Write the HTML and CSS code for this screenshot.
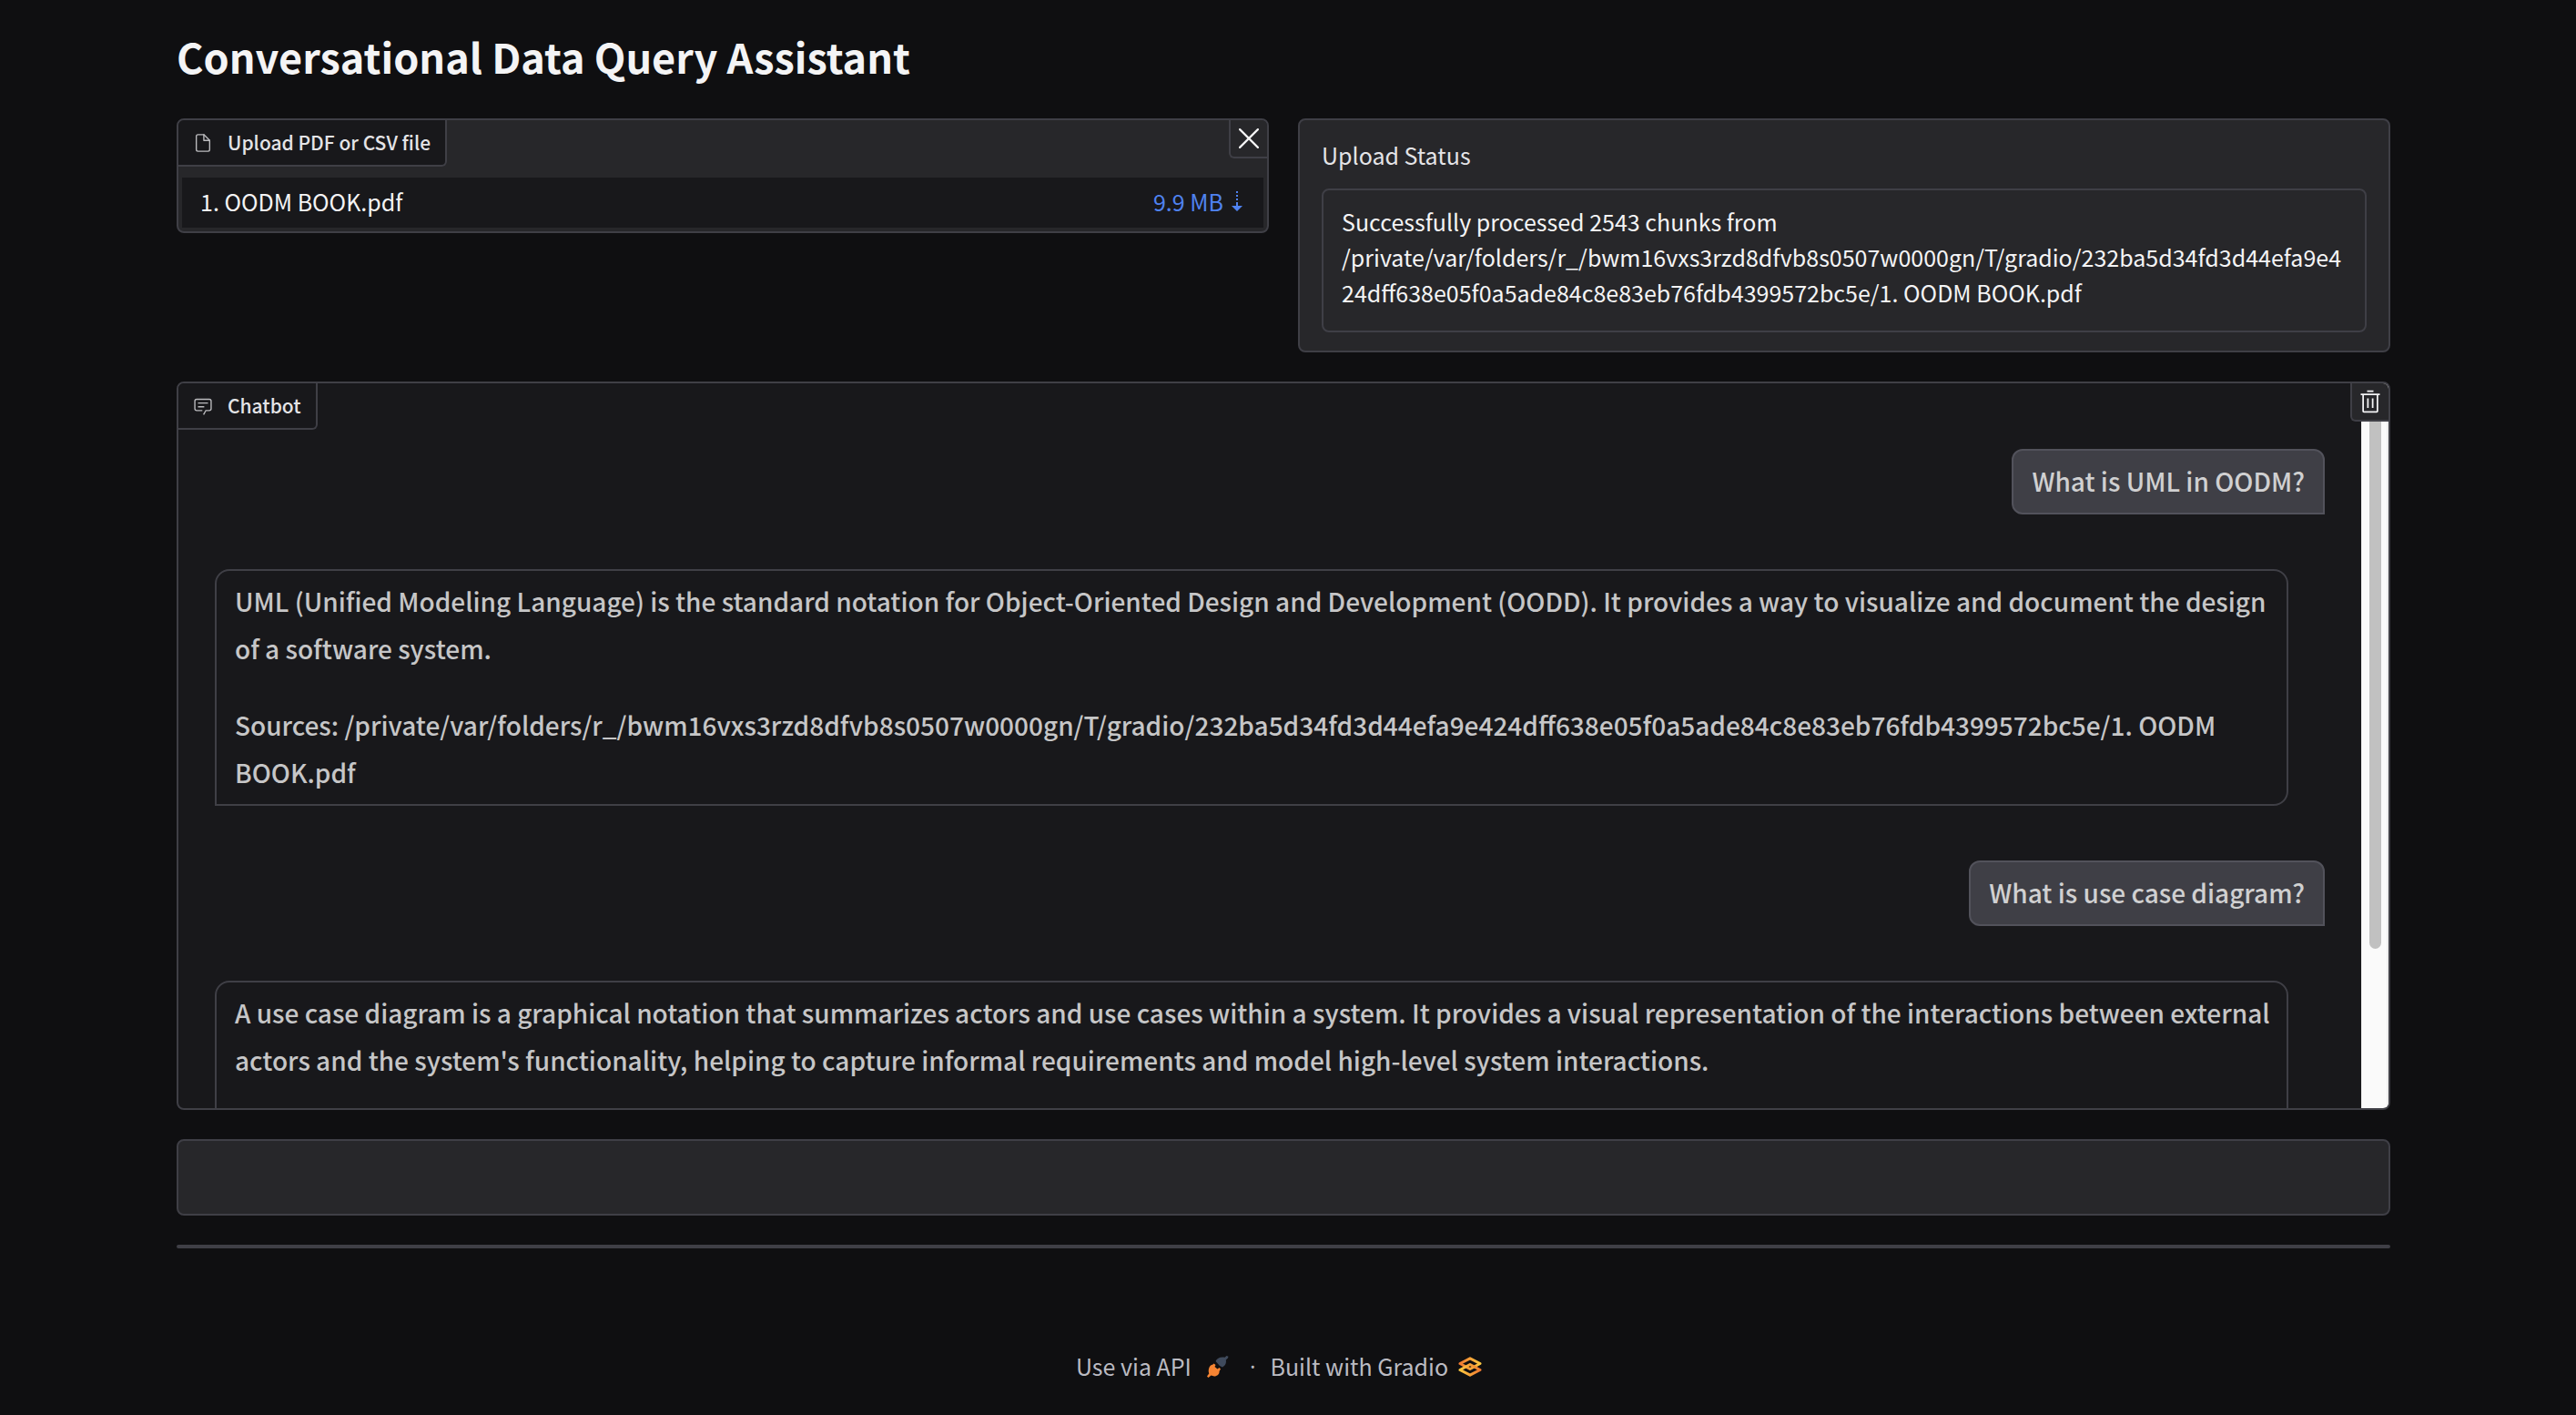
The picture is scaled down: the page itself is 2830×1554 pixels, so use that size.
FILE: index.html
```html
<!DOCTYPE html>
<html lang="en">
<head>
<meta charset="utf-8">
<meta name="viewport" content="width=device-width, initial-scale=1">
<title>Conversational Data Query Assistant</title>
<link rel="stylesheet" href="styles.css">
</head>
<body>
<main class="app">
  <h1 class="title">Conversational Data Query Assistant</h1>

  <div class="row">
    <section class="block file-block">
      <div class="block-label">
        <svg class="label-icon" viewBox="0 0 24 24" fill="none" stroke="currentColor" stroke-width="1.5" stroke-linecap="round" stroke-linejoin="round" aria-hidden="true"><path d="M13 2H6a2 2 0 0 0-2 2v16a2 2 0 0 0 2 2h12a2 2 0 0 0 2-2V9z"/><path d="M13 2v7h7"/></svg>
        <span>Upload PDF or CSV file</span>
      </div>
      <button class="corner-button" type="button" aria-label="Clear">
        <svg class="close-icon" viewBox="0 0 20 20" stroke="currentColor" stroke-width="2" stroke-linecap="round" aria-hidden="true"><path d="M1 1 19 19M19 1 1 19"/></svg>
      </button>
      <table class="files">
        <tbody>
          <tr>
            <td class="file-name">1. OODM BOOK.pdf</td>
            <td class="file-size"><a class="download" href="#">9.9 MB<svg class="download-icon" viewBox="0 0 12 24" fill="currentColor" aria-hidden="true"><path d="M5 1h2v2H5zM5 5h2v2H5zM5 9h2v2H5zM5 13h2v4H5zM0 17h12l-6 6z"/></svg></a></td>
          </tr>
        </tbody>
      </table>
    </section>

    <section class="block status-block">
      <label class="status-label" for="status">Upload Status</label>
      <textarea class="status-text" id="status" rows="3" readonly>Successfully processed 2543 chunks from /private/var/folders/r_/bwm16vxs3rzd8dfvb8s0507w0000gn/T/gradio/232ba5d34fd3d44efa9e424dff638e05f0a5ade84c8e83eb76fdb4399572bc5e/1. OODM BOOK.pdf</textarea>
    </section>
  </div>

  <section class="block chat-block">
    <div class="block-label">
      <svg class="label-icon" viewBox="0 0 32 32" fill="currentColor" aria-hidden="true"><path d="M17.74 30 16 29l4-7h6a2 2 0 0 0 2-2V8a2 2 0 0 0-2-2H6a2 2 0 0 0-2 2v12a2 2 0 0 0 2 2h9v2H6a4 4 0 0 1-4-4V8a4 4 0 0 1 4-4h20a4 4 0 0 1 4 4v12a4 4 0 0 1-4 4h-4.84Z"/><path d="M8 10h16v2H8zm0 6h10v2H8z"/></svg>
      <span>Chatbot</span>
    </div>
    <button class="corner-button" type="button" aria-label="Clear chat">
      <svg class="trash-icon" viewBox="0 0 32 32" fill="currentColor" aria-hidden="true"><path d="M12 12h2v12h-2zm6 0h2v12h-2z"/><path d="M4 6v2h2v20a2 2 0 0 0 2 2h16a2 2 0 0 0 2-2V8h2V6zm4 22V8h16v20zm4-26h8v2h-8z"/></svg>
    </button>
    <div class="messages">
      <div class="message user">What is UML in OODM?</div>
      <div class="message bot">
        <p>UML (Unified Modeling Language) is the standard notation for Object-Oriented Design and Development (OODD). It provides a way to visualize and document the design of a software system.</p>
        <p>Sources: /private/var/folders/r_/bwm16vxs3rzd8dfvb8s0507w0000gn/T/gradio/232ba5d34fd3d44efa9e424dff638e05f0a5ade84c8e83eb76fdb4399572bc5e/1. OODM BOOK.pdf</p>
      </div>
      <div class="message user">What is use case diagram?</div>
      <div class="message bot">
        <p>A use case diagram is a graphical notation that summarizes actors and use cases within a system. It provides a visual representation of the interactions between external actors and the system's functionality, helping to capture informal requirements and model high-level system interactions.</p>
      </div>
    </div>
    <div class="scroll-track" aria-hidden="true"><div class="scroll-thumb"></div></div>
  </section>

  <input class="question" type="text" aria-label="Question">
  <hr class="divider">
</main>

<footer class="footer">
  <a class="footer-link" href="#">Use via API
    <svg class="plug-icon" viewBox="0 0 24 24" aria-hidden="true"><path fill="#3f4a5c" d="M9.500 6C11 2.500 15 .8 19.500 1.800L21.500 0 23.500 .8 23 2.500 20.800 4.500C21.500 8 20 11 17 12.500L14 11Z"/><path fill="#f58433" d="M4 10.500 6.500 9.500 7.500 8.500 9.500 10 8.500 12 11.500 14.500 13.500 13 15 14.500 13.500 17C14 20 11 22.500 8 22.500L4.500 21.500 1.500 24 0 22.500 2.200 19.500C1 16 2 12.500 4 10.500Z"/></svg>
  </a>
  <span class="dot">·</span>
  <a class="footer-link" href="#">Built with Gradio
    <svg class="gradio-icon" viewBox="0 0 26 22" fill="none" stroke-width="3" stroke-linejoin="round" aria-hidden="true"><defs><linearGradient id="upper" x1="0" x2="1"><stop offset="0" stop-color="#f07a30"/><stop offset="1" stop-color="#fbc740"/></linearGradient><linearGradient id="lower" x1="0" x2="1"><stop offset="0" stop-color="#fcc940"/><stop offset="1" stop-color="#f07a30"/></linearGradient></defs><path stroke="url(#upper)" d="M2 7.500 13 1.800 24 7.500 13 13.500Z"/><path stroke="url(#lower)" d="M2 14.500 13 8.500 24 14.500 13 20.200Z"/></svg>
  </a>
</footer>
</body>
</html>
```

FILE: styles.css
```css
* {
  box-sizing: border-box;
}

body {
  margin: 0;
  background: #0f0f11;
  color: #f4f4f5;
  font-family: "Noto Sans CJK SC", "Open Sans", sans-serif;
  font-size: 25px;
  line-height: 39px;
}

.app {
  display: flex;
  flex-direction: column;
  gap: 32px;
  padding: 30px 204px 0 194px;
}

.title {
  margin: 0;
  padding-bottom: 4px;
  font-size: 45px;
  line-height: 64px;
  font-weight: 700;
}

.row {
  display: grid;
  grid-template-columns: 1fr 1fr;
  gap: 32px;
  align-items: start;
}

.block {
  position: relative;
  overflow: hidden;
  border: 2px solid #3f3f46;
  border-radius: 8px;
  background: #27272a;
}

.block-label {
  display: flex;
  align-items: center;
  gap: 16px;
  width: max-content;
  height: 51px;
  padding: 0 16px;
  border: solid #3f3f46;
  border-width: 0 2px 2px 0;
  border-bottom-right-radius: 6px;
  background: #18181b;
  color: #e4e4e7;
  font-size: 21px;
  font-weight: 500;
}

.label-icon {
  width: 22px;
  height: 22px;
  opacity: 0.8;
}

.corner-button {
  position: absolute;
  top: 0;
  right: 0;
  z-index: 1;
  display: flex;
  align-items: center;
  justify-content: center;
  width: 42px;
  height: 42px;
  padding: 0;
  border: solid #3f3f46;
  border-width: 0 0 2px 2px;
  border-bottom-left-radius: 6px;
  background: #27272a;
  color: #f4f4f5;
}

.close-icon {
  width: 22px;
  height: 22px;
}

.trash-icon {
  width: 28px;
  height: 28px;
}

.files {
  width: calc(100% - 8px);
  margin: 12px 4px 4px;
  border-collapse: collapse;
  background: #18181b;
}

.files td {
  padding: 7px 20px 9px;
}

.files .file-size {
  padding-right: 23px;
  text-align: right;
}

.download {
  color: #4f82f0;
  text-decoration: none;
}

.download-icon {
  width: 12px;
  height: 24px;
  margin-left: 9px;
  vertical-align: -1px;
}

.status-block {
  display: flex;
  flex-direction: column;
  gap: 17px;
  padding: 19px 24px 20px;
}

.status-label {
  color: #e4e4e7;
}

.status-text {
  width: 100%;
  height: 158px;
  padding: 15px 20px;
  border: 2px solid #3f3f46;
  border-radius: 8px;
  outline: none;
  background: #27272a;
  color: #f4f4f5;
  font: inherit;
  overflow: hidden;
  resize: none;
  word-break: break-word;
}

.chat-block {
  display: grid;
  grid-template-columns: 1fr 30px;
  height: 800px;
  background: #18181b;
}

.chat-block .block-label {
  position: absolute;
  top: 0;
  left: 0;
}

.messages {
  display: flex;
  flex-direction: column;
  gap: 60px;
  min-height: 0;
  padding: 72px 40px 0;
  overflow: hidden;
  color: #c6c6c7;
  font-size: 28px;
  font-weight: 500;
  line-height: 52px;
}

.message {
  flex: none;
  padding: 7px 20px 9px;
  border: 2px solid #3f3f46;
}

.message p {
  margin: 0 0 32px;
}

.message p:last-child {
  margin-bottom: 0;
}

.user {
  align-self: flex-end;
  border-color: #52525b;
  border-radius: 12px 12px 0 12px;
  background: #3f3f46;
  color: #d0d0d1;
}

.bot {
  min-height: 260px;
  margin-right: 40px;
  padding-right: 16px;
  border-radius: 16px 16px 16px 0;
}

.scroll-track {
  padding: 0 6px 0 8px;
  border: solid #ededed;
  border-width: 0 2px 0 1px;
  background: #fafafa;
}

.scroll-thumb {
  height: 78%;
  border-radius: 8px;
  background: #c1c1c1;
}

.question {
  width: 100%;
  height: 84px;
  padding: 20px 24px;
  border: 2px solid #3f3f46;
  border-radius: 8px;
  outline: none;
  background: #27272a;
  color: #f4f4f5;
  font: inherit;
}

.divider {
  width: 100%;
  height: 4px;
  margin: 0;
  border: 0;
  border-radius: 2px;
  background: #3f3f46;
}

.footer {
  display: flex;
  align-items: center;
  justify-content: center;
  padding: 110px 20px 32px 0;
  color: #bbbbc2;
}

.footer-link {
  display: flex;
  align-items: center;
  color: inherit;
  text-decoration: none;
}

.dot {
  padding: 0 16px 0 23px;
  font-family: "Open Sans", sans-serif;
}

.plug-icon {
  width: 24px;
  height: 24px;
  margin-left: 17px;
}

.gradio-icon {
  width: 26px;
  height: 22px;
  margin-left: 11px;
}
```
